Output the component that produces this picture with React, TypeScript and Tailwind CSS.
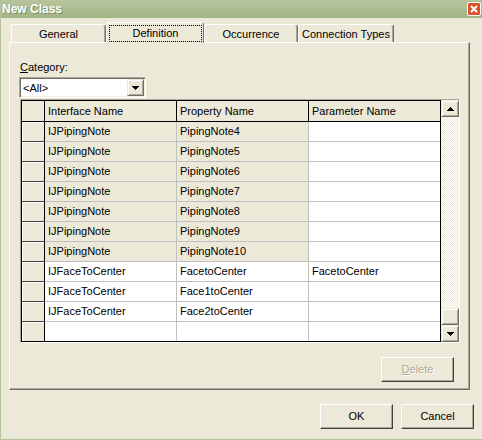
import React from "react";

type Row = { iface: string; prop: string; param: string; ro: boolean };

const rows: Row[] = [
  { iface: "IJPipingNote", prop: "PipingNote4", param: "", ro: true },
  { iface: "IJPipingNote", prop: "PipingNote5", param: "", ro: true },
  { iface: "IJPipingNote", prop: "PipingNote6", param: "", ro: true },
  { iface: "IJPipingNote", prop: "PipingNote7", param: "", ro: true },
  { iface: "IJPipingNote", prop: "PipingNote8", param: "", ro: true },
  { iface: "IJPipingNote", prop: "PipingNote9", param: "", ro: true },
  { iface: "IJPipingNote", prop: "PipingNote10", param: "", ro: true },
  { iface: "IJFaceToCenter", prop: "FacetoCenter", param: "FacetoCenter", ro: false },
  { iface: "IJFaceToCenter", prop: "Face1toCenter", param: "", ro: false },
  { iface: "IJFaceToCenter", prop: "Face2toCenter", param: "", ro: false },
  { iface: "", prop: "", param: "", ro: false },
];

// raised 3d look of classic windows controls
const raised =
  "border border-t-[#ece9d8] border-l-[#ece9d8] border-r-[#716f64] border-b-[#716f64] shadow-[inset_1px_1px_0_#fff,inset_-1px_-1px_0_#aca899] bg-[#ece9d8]";

function ArrowUp() {
  return (
    <svg width="7" height="4" viewBox="0 0 7 4" shapeRendering="crispEdges">
      <path d="M3 0h1v1h1v1h1v1h1v1H0V3h1V2h1V1h1z" fill="#000" />
    </svg>
  );
}

function ArrowDown() {
  return (
    <svg width="7" height="4" viewBox="0 0 7 4" shapeRendering="crispEdges">
      <path d="M0 0h7v1h-1v1h-1v1h-1v1h-1v-1h-1v-1h-1v-1h-1z" fill="#000" />
    </svg>
  );
}

function Tab({ label, className }: { label: string; className: string }) {
  return (
    <div
      className={`flex h-[18px] items-center justify-center rounded-t-[3px] border-l border-t border-r border-l-white border-t-white border-r-[#716f64] pt-[1px] shadow-[inset_-1px_0_0_#aca899] ${className}`}
    >
      {label}
    </div>
  );
}

function Button({ children, disabled }: { children: React.ReactNode; disabled?: boolean }) {
  return (
    <button
      type="button"
      className={`flex h-[25px] w-[73px] items-center justify-center border border-t-white border-l-white border-r-[#404040] border-b-[#404040] bg-[#ece9d8] shadow-[inset_-1px_-1px_0_#aca899] ${
        disabled ? "text-[#aca899] [text-shadow:1px_1px_0_#fff]" : "text-black"
      }`}
    >
      {children}
    </button>
  );
}

export default function App() {
  return (
    <div className="h-[440px] w-[482px] overflow-hidden border-b border-l border-[#b3c49a] bg-[#ece9d8] font-['Liberation_Sans',Arial,sans-serif] text-[11px] leading-none text-black">
      {/* title bar */}
      <div className="flex h-[18px] items-center justify-between bg-linear-to-b from-[#b6c59c] to-[#a4b585] pl-[1px] pr-[1px]">
        <span className="text-[12px] font-bold text-white [text-shadow:1px_1px_0_#7d8f62]">New Class</span>
        <div className="flex h-[14px] w-[14px] items-center justify-center rounded-[2px] border border-white bg-[#d9532c]">
          <svg width="8" height="8" viewBox="0 0 8 8">
            <path d="M1 1L7 7M7 1L1 7" stroke="#fff" strokeWidth="2" />
          </svg>
        </div>
      </div>

      <div className="pl-[8px]">
        {/* tabs */}
        <div className="ml-[2px] mt-[4px] flex h-[20px] items-end">
          <Tab label="General" className="w-[95px]" />
          <div className="relative z-10 -mb-px flex h-[21px] w-[98px] flex-col rounded-t-[3px] border-l border-t border-r border-l-white border-t-white border-r-[#716f64] bg-[#ece9d8] pl-[2px] pr-[1px] pt-[2px]">
            <div className="flex h-[17px] items-center justify-center border border-dotted border-black">
              Definition
            </div>
          </div>
          <Tab label="Occurrence" className="w-[94px]" />
          <Tab label="Connection Types" className="w-[96px]" />
        </div>

        {/* tab panel */}
        <div className="flex h-[348px] w-[461px] flex-col border border-t-white border-l-white border-r-[#716f64] border-b-[#716f64] pl-[10px] pt-[18px] shadow-[inset_-1px_-1px_0_#aca899]">
          <div className="h-[13px] leading-[13px]">
            <u className="underline-offset-1">C</u>ategory:
          </div>

          {/* combo box */}
          <div className="ml-[-1px] mt-[3px] flex h-[21px] w-[127px] border border-t-[#aca899] border-l-[#aca899] border-r-white border-b-white bg-white shadow-[inset_1px_1px_0_#716f64,inset_-1px_-1px_0_#f1efe2]">
            <div className="flex flex-1 items-center pl-[3px] pt-[1px]">&lt;All&gt;</div>
            <div className={`mr-px mt-px flex h-[17px] w-[17px] items-center justify-center ${raised}`}>
              <ArrowDown />
            </div>
          </div>

          {/* grid */}
          <div className="mt-[1px] flex w-[440px] border border-t-[#aca899] border-l-[#aca899] border-r-white border-b-white">
            <div className="flex h-[242px] w-[420px] flex-col border border-black">
              <div className="flex h-[21px] border-b border-black bg-[#ece9d8]">
                <div className="w-[23px] border-r border-black" />
                <div className="flex w-[132px] items-center border-r border-black pl-[3px]">Interface Name</div>
                <div className="flex w-[132px] items-center border-r border-black pl-[3px]">Property Name</div>
                <div className="flex flex-1 items-center pl-[3px]">Parameter Name</div>
              </div>
              {rows.map((r, i) => {
                const last = i === rows.length - 1;
                const bg = r.ro ? "bg-[#ece9d8]" : "bg-white";
                const line = last ? "" : "border-b border-b-[#c0c0c0]";
                return (
                  <div key={i} className={`flex ${last ? "h-[19px]" : "h-[20px]"}`}>
                    <div
                      className={`w-[23px] border-r border-r-black bg-[#ece9d8] shadow-[inset_1px_1px_0_#fff] ${
                        last ? "" : "border-b border-b-[#404040]"
                      }`}
                    />
                    <div className={`flex w-[132px] items-center border-r border-r-[#c0c0c0] pl-[3px] ${bg} ${line}`}>
                      {r.iface}
                    </div>
                    <div className={`flex w-[132px] items-center border-r border-r-[#c0c0c0] pl-[3px] ${bg} ${line}`}>
                      {r.prop}
                    </div>
                    <div className={`flex flex-1 items-center bg-white pl-[3px] ${line}`}>{r.param}</div>
                  </div>
                );
              })}
            </div>

            {/* scrollbar */}
            <div className="flex h-[242px] w-[18px] flex-col">
              <div className={`flex h-[17px] items-center justify-center ${raised}`}>
                <ArrowUp />
              </div>
              <div className="flex-1 bg-[image:repeating-conic-gradient(#ffffff_0_25%,#ece9d8_0_50%)] bg-[length:2px_2px]" />
              <div className={`h-[17px] ${raised}`} />
              <div className={`flex h-[17px] items-center justify-center ${raised}`}>
                <ArrowDown />
              </div>
            </div>
          </div>

          <div className="mt-[14px] flex justify-end pr-[15px]">
            <Button disabled>
              <u className="underline-offset-1">D</u>elete
            </Button>
          </div>
        </div>

        {/* dialog buttons */}
        <div className="mt-[14px] flex justify-end gap-[8px] pr-[8px]">
          <Button>OK</Button>
          <Button>Cancel</Button>
        </div>
      </div>
    </div>
  );
}
